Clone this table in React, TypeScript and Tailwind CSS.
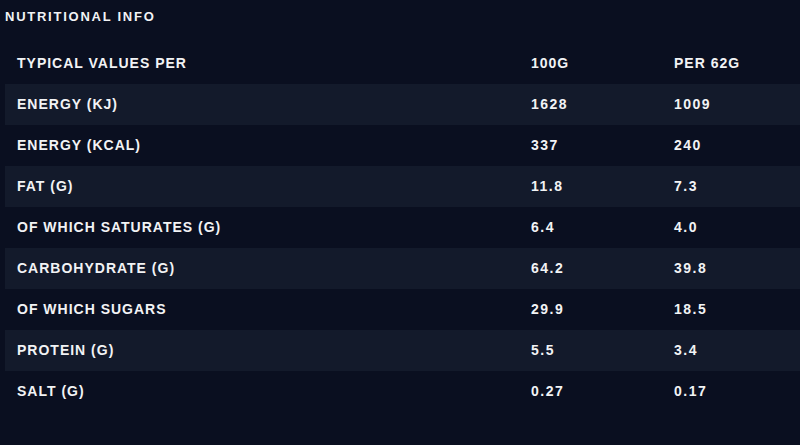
import React from 'react';

interface Row {
    label: string;
    per100: string;
    perServing: string;
}

const rows: Row[] = [
    { label: 'Energy (kJ)', per100: '1628', perServing: '1009' },
    { label: 'Energy (kcal)', per100: '337', perServing: '240' },
    { label: 'Fat (g)', per100: '11.8', perServing: '7.3' },
    { label: 'of which saturates (g)', per100: '6.4', perServing: '4.0' },
    { label: 'Carbohydrate (g)', per100: '64.2', perServing: '39.8' },
    { label: 'of which sugars', per100: '29.9', perServing: '18.5' },
    { label: 'Protein (g)', per100: '5.5', perServing: '3.4' },
    { label: 'Salt (g)', per100: '0.27', perServing: '0.17' },
];

const App: React.FC = () => {
    return (
        <div
            className="w-[800px] h-[445px] bg-[#0a0f20] text-[#f2f3f5] overflow-hidden"
            style={{ fontFamily: '"Liberation Sans", Arial, sans-serif' }}
        >
            <h2 className="pl-[5px] pt-[9px] h-[43px] text-[13px] leading-[15px] font-bold tracking-[1.75px] uppercase">
                Nutritional info
            </h2>
            <table className="ml-[5px] w-[795px] border-collapse text-[14px] font-bold tracking-[1px] uppercase">
                <colgroup>
                    <col className="w-[514px]" />
                    <col className="w-[143px]" />
                    <col />
                </colgroup>
                <thead>
                    <tr className="h-[41px]">
                        <th className="text-left font-bold pl-3">Typical values per</th>
                        <th className="text-left font-bold pl-3">100g</th>
                        <th className="text-left font-bold pl-3">per 62g</th>
                    </tr>
                </thead>
                <tbody>
                    {rows.map((row, i) => (
                        <tr key={row.label} className={i % 2 === 0 ? 'h-[41px] bg-[#131a2b]' : 'h-[41px]'}>
                            <td className="pl-3">{row.label}</td>
                            <td className="pl-3 tracking-[1.5px]">{row.per100}</td>
                            <td className="pl-3 tracking-[1.5px]">{row.perServing}</td>
                        </tr>
                    ))}
                </tbody>
            </table>
        </div>
    );
};

export default App;
